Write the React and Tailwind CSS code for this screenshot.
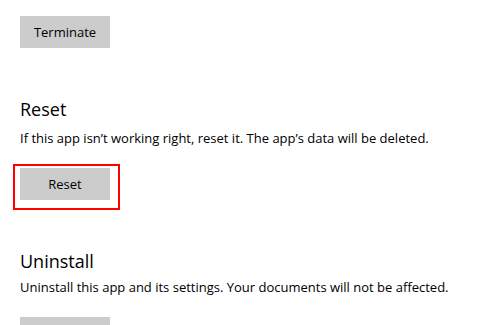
import React from 'react';

// Windows settings style "Advanced options" fragment
const GreyButton = ({ children, label }) => (
  <button
    aria-label={label}
    className="h-8 w-[90px] bg-[#cccccc] text-[13px] leading-5 text-black"
  >
    {children}
  </button>
);

const App = () => {
  return (
    <div className="w-[492px] h-[325px] overflow-hidden bg-white pl-5 pt-4 font-['Open_Sans',sans-serif] text-black">
      <GreyButton>Terminate</GreyButton>

      <section className="mt-[49px]">
        <h2 className="text-[18px] leading-6">Reset</h2>
        <p className="mt-[7px] text-[13px] leading-5">
          If this app isn’t working right, reset it. The app’s data will be deleted.
        </p>
        <div className="relative mt-5 w-[90px]">
          <GreyButton>Reset</GreyButton>
          {/* highlight around the Reset button */}
          <div className="absolute -left-[7px] -top-1 h-[46px] w-[107px] border-2 border-[#ff0000] pointer-events-none" />
        </div>
      </section>

      <section className="mt-[49px]">
        <h2 className="text-[18px] leading-6">Uninstall</h2>
        <p className="mt-1 text-[13px] leading-5">
          Uninstall this app and its settings. Your documents will not be affected.
        </p>
        {/* button is cut off by the bottom edge; its label sits below the fold */}
        <div className="mt-5">
          <GreyButton label="Uninstall" />
        </div>
      </section>
    </div>
  );
};

export default App;
